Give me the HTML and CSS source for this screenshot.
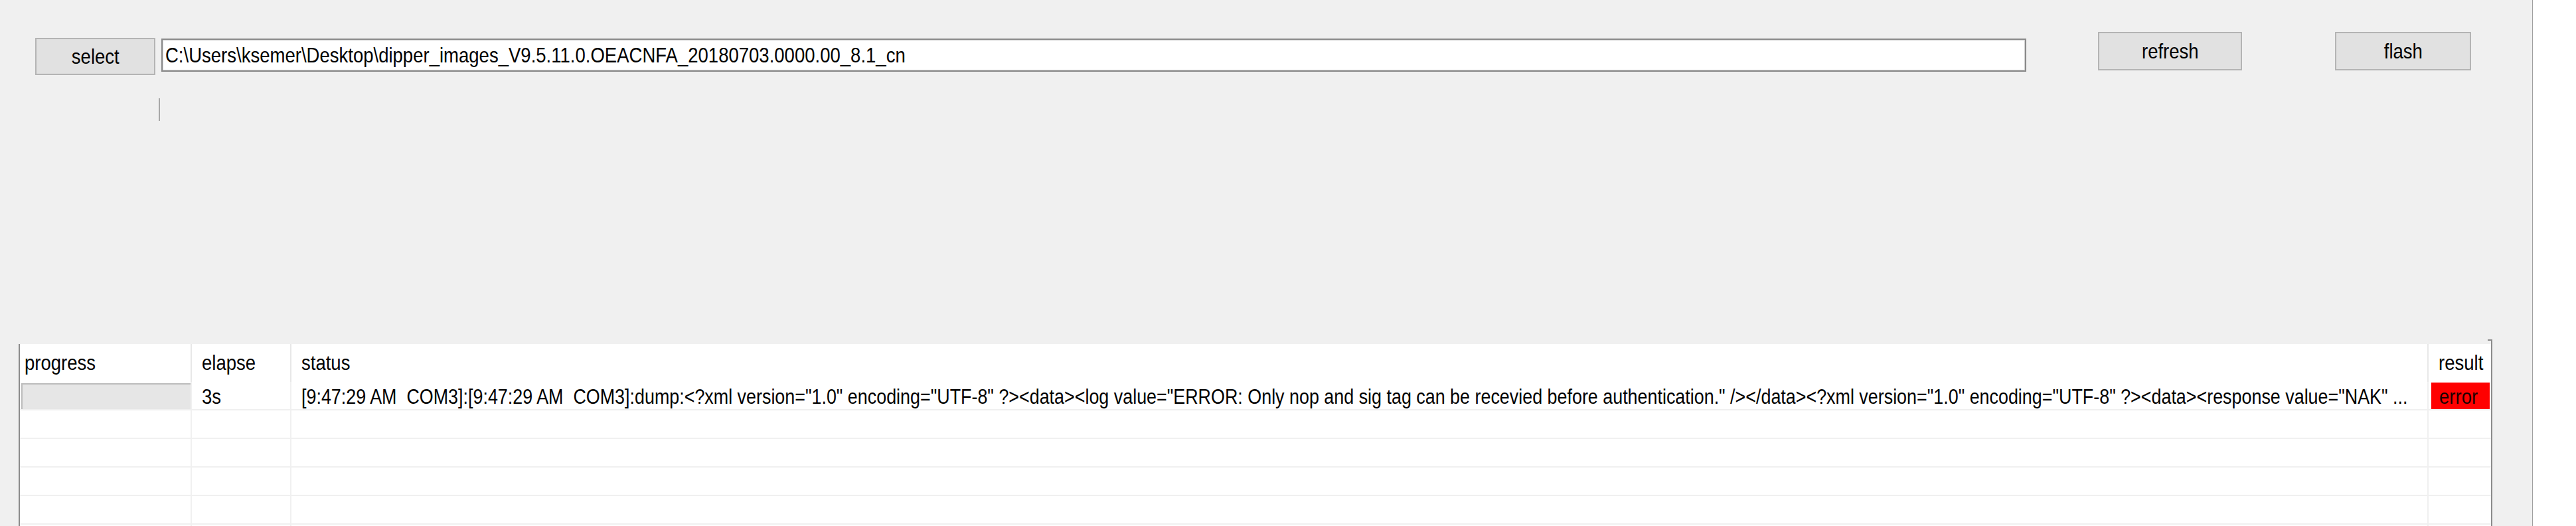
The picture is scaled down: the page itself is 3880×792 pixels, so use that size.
FILE: index.html
```html
<!DOCTYPE html>
<html lang="en">
  <head>
    <meta charset="UTF-8" />
    <title>flash tool</title>
    <link rel="stylesheet" href="styles.css">
  </head>
  <body>
    <div class="screen">
      <div class="window">
        <!-- top bar: path picker + actions -->
        <div class="toolbar">
          <button class="btn btn-select"><span class="txt">select</span></button>
          <div class="path-box"><span class="txt">C:\Users\ksemer\Desktop\dipper_images_V9.5.11.0.OEACNFA_20180703.0000.00_8.1_cn</span></div>
          <button class="btn btn-refresh"><span class="txt">refresh</span></button>
          <button class="btn btn-flash"><span class="txt">flash</span></button>
        </div>

        <div class="port-line"></div>

        <!-- device list -->
        <div class="list">
          <div class="list-grid">
            <div class="head head-first"><span class="txt">progress</span></div>
            <div class="head"><span class="txt">elapse</span></div>
            <div class="head"><span class="txt">status</span></div>
            <div class="head head-last"><span class="txt">result</span></div>

            <div class="cell cell-progress"><div class="bar"></div></div>
            <div class="cell"><span class="txt">3s</span></div>
            <div class="cell cell-status"><span class="txt">[9:47:29 AM&nbsp; COM3]:[9:47:29 AM&nbsp; COM3]:dump:&lt;?xml version="1.0" encoding="UTF-8" ?&gt;&lt;data&gt;&lt;log value="ERROR: Only nop and sig tag can be recevied before authentication." /&gt;&lt;/data&gt;&lt;?xml version="1.0" encoding="UTF-8" ?&gt;&lt;data&gt;&lt;response value="NAK" ...</span></div>
            <div class="cell cell-last"><div class="result-error"><span class="txt">error</span></div></div>

            <div class="cell"></div><div class="cell"></div><div class="cell"></div><div class="cell cell-last"></div>
            <div class="cell"></div><div class="cell"></div><div class="cell"></div><div class="cell cell-last"></div>
            <div class="cell"></div><div class="cell"></div><div class="cell"></div><div class="cell cell-last"></div>
            <div class="cell"></div><div class="cell"></div><div class="cell"></div><div class="cell cell-last"></div>
            <div class="cell"></div><div class="cell"></div><div class="cell"></div><div class="cell cell-last"></div>
          </div>
        </div>
      </div>
      <div class="outside"></div>
    </div>
  </body>
</html>
```

FILE: styles.css
```css
/* reset */
* {
  margin: 0;
  padding: 0;
  box-sizing: border-box;
}

body {
  font-family: "Liberation Sans", Arial, sans-serif;
  font-size: 32px;
  color: #000;
  background-color: #fff;
  width: 3880px;
  height: 792px;
  overflow: hidden;
}

/* the old WinForms font is narrow, squeeze Arial to match */
.txt {
  display: inline-block;
  white-space: nowrap;
  transform: scaleX(0.86);
  transform-origin: left center;
}

.screen {
  display: flex;
  height: 792px;
}

/* form area */
.window {
  width: 3815px;
  height: 792px;
  background-color: #f0f0f0;
  border-right: 1px solid #a0a0a0;
  overflow: hidden;
}

.outside {
  flex: 1;
  background-color: #fff;
}

/* top bar */
.toolbar {
  display: flex;
  align-items: flex-start;
  padding: 48px 0 0 53px;
}

.btn {
  font-family: inherit;
  font-size: 32px;
  color: #000;
  background-color: #e1e1e1;
  border: 2px solid #b4b4b4;
  display: flex;
  align-items: center;
  justify-content: center;
}

.btn .txt {
  transform-origin: center center;
}

.btn-select {
  width: 181px;
  height: 56px;
  margin-top: 9px;
}

.path-box {
  width: 2809px;
  height: 50px;
  margin: 10px 0 0 9px;
  background-color: #fff;
  border: 2px solid #8a8a8a;
  box-shadow: inset 0 0 0 1px #d0d0d0;
  padding: 0 0 0 4px;
  line-height: 46px;
  white-space: nowrap;
  overflow: hidden;
}

.btn-refresh {
  width: 217px;
  height: 58px;
  margin-left: 108px;
}

.btn-flash {
  width: 205px;
  height: 58px;
  margin-left: 140px;
}

.port-line {
  width: 2px;
  height: 34px;
  margin: 35px 0 0 239px;
  background-color: #a8a8a8;
}

/* list */
.list {
  position: relative;
  width: 3726px;
  margin: 336px 0 0 28px;
  border-left: 2px solid #8c8c8c;
  border-right: 2px solid #8c8c8c;
  background-color: #fff;
}

.list::after {
  content: "";
  position: absolute;
  right: -2px;
  top: -7px;
  width: 5px;
  height: 7px;
  border-top: 2px solid #8c8c8c;
  border-right: 2px solid #8c8c8c;
}

.list-grid {
  display: grid;
  grid-template-columns: 259px 150px 3219px 94px;
}

.head {
  height: 57px;
  padding: 10px 0 0 15px;
  border-right: 2px solid #e8e8e8;
  white-space: nowrap;
  overflow: hidden;
}

.head-first {
  padding-left: 7px;
}

.head-last {
  border-right: none;
}

.cell {
  height: 43px;
  padding: 4px 0 0 15px;
  border-right: 2px solid #f0f0f0;
  border-bottom: 2px solid #f0f0f0;
  white-space: nowrap;
  overflow: hidden;
}

.cell-status .txt {
  transform: scaleX(0.84);
}

.cell-last {
  border-right: none;
}

.cell-progress {
  padding: 2px 0 0 2px;
}

.bar {
  width: 258px;
  height: 41px;
  background-color: #e6e6e6;
  border: 2px solid #bcbcbc;
}

.result-error {
  margin: -3px 0 0 -11px;
  width: 88px;
  height: 40px;
  padding: 3px 0 0 12px;
  background-color: #ff0000;
  color: #1a0000;
}
```
